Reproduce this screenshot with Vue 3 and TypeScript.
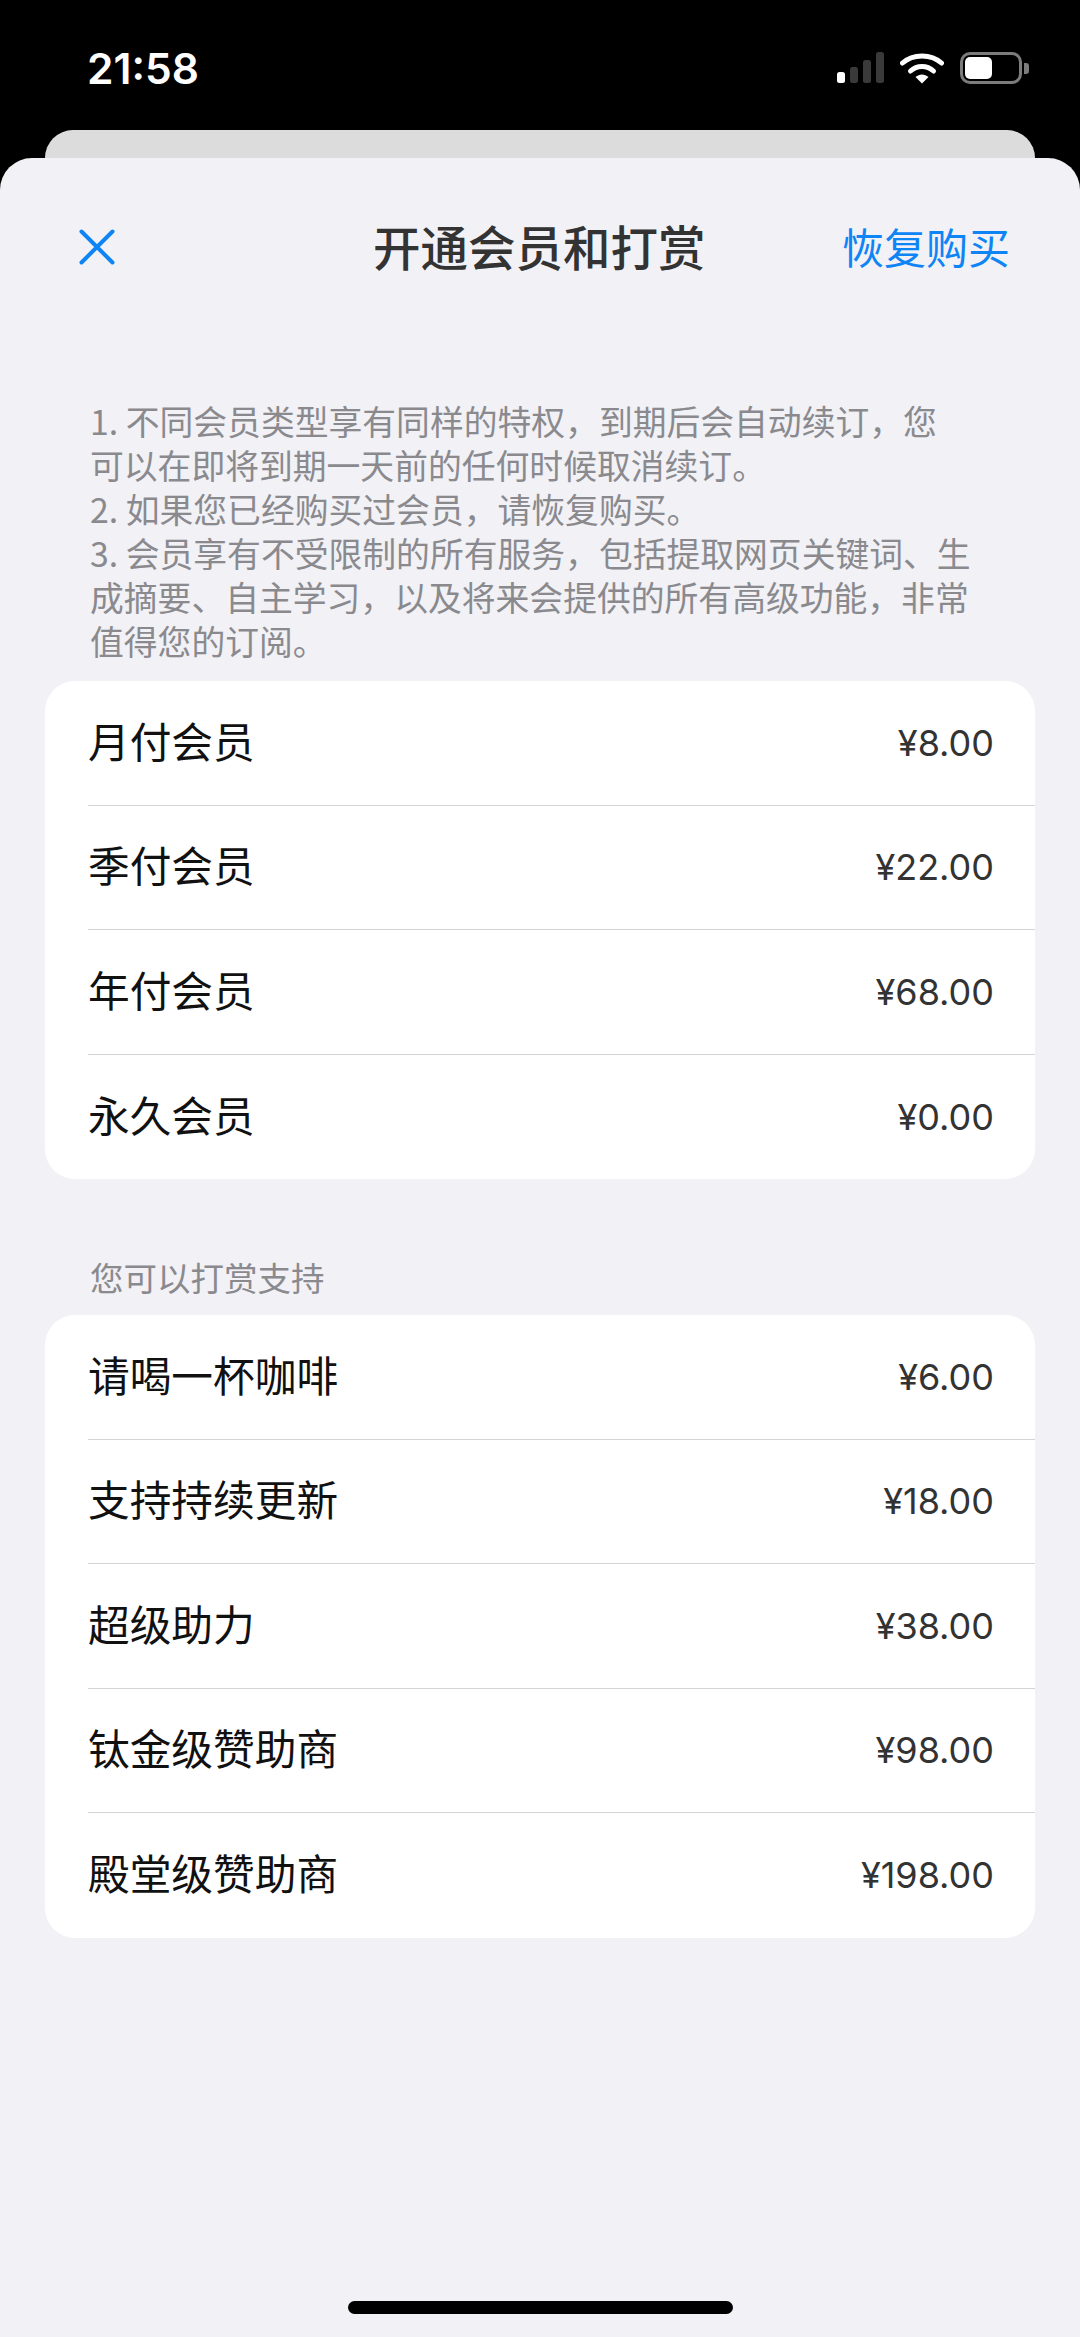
<template>
  <div class="page">
    <!-- status bar -->
    <div class="status-bar">
      <span class="time">21:58</span>
      <div class="status-icons">
        <svg class="signal" width="47" height="32" viewBox="0 0 47 32">
          <rect x="0" y="20" width="8" height="11" rx="2.5" fill="#fff" />
          <rect x="13" y="15" width="8" height="16" rx="2.5" fill="#3a3a3a" />
          <rect x="26" y="8" width="8" height="23" rx="2.5" fill="#3a3a3a" />
          <rect x="39" y="0" width="8" height="31" rx="2.5" fill="#3a3a3a" />
        </svg>
        <svg class="wifi" width="44" height="32" viewBox="0 0 44 32">
          <path d="M2.5 11 C13 1.5 31 1.5 41.5 11" fill="none" stroke="#fff" stroke-width="5" stroke-linecap="round" />
          <path d="M10.5 19 C17 13 27 13 33.5 19" fill="none" stroke="#fff" stroke-width="5" stroke-linecap="round" />
          <path d="M15.5 25 C19.5 21.5 24.5 21.5 28.5 25 L22 31.5 Z" fill="#fff" />
        </svg>
        <div class="battery">
          <div class="battery-fill"></div>
          <div class="battery-tip"></div>
        </div>
      </div>
    </div>

    <div class="back-card"></div>

    <div class="sheet">
      <header class="nav">
        <svg class="close" width="36" height="36" viewBox="0 0 36 36">
          <path d="M2.5 2.5 L33.5 33.5 M33.5 2.5 L2.5 33.5" fill="none" stroke="#0f84f5" stroke-width="4" stroke-linecap="round" />
        </svg>
        <h1 class="nav-title">开通会员和打赏</h1>
        <span class="restore">恢复购买</span>
      </header>

      <div class="notes">
        <p v-for="line in notes" :key="line">{{ line }}</p>
      </div>

      <ul class="card">
        <li v-for="item in plans" :key="item.name" class="row">
          <span class="row-name">{{ item.name }}</span>
          <span class="row-price">{{ item.price }}</span>
        </li>
      </ul>

      <div class="section-label">您可以打赏支持</div>

      <ul class="card">
        <li v-for="item in tips" :key="item.name" class="row">
          <span class="row-name">{{ item.name }}</span>
          <span class="row-price">{{ item.price }}</span>
        </li>
      </ul>

      <div class="home-bar"></div>
    </div>
  </div>
</template>

<script setup lang="ts">
type PriceItem = {
  name: string
  price: string
}

const notes: string[] = [
  '1. 不同会员类型享有同样的特权，到期后会自动续订，您',
  '可以在即将到期一天前的任何时候取消续订。',
  '2. 如果您已经购买过会员，请恢复购买。',
  '3. 会员享有不受限制的所有服务，包括提取网页关键词、生',
  '成摘要、自主学习，以及将来会提供的所有高级功能，非常',
  '值得您的订阅。'
]

const plans: PriceItem[] = [
  { name: '月付会员', price: '¥8.00' },
  { name: '季付会员', price: '¥22.00' },
  { name: '年付会员', price: '¥68.00' },
  { name: '永久会员', price: '¥0.00' }
]

const tips: PriceItem[] = [
  { name: '请喝一杯咖啡', price: '¥6.00' },
  { name: '支持持续更新', price: '¥18.00' },
  { name: '超级助力', price: '¥38.00' },
  { name: '钛金级赞助商', price: '¥98.00' },
  { name: '殿堂级赞助商', price: '¥198.00' }
]
</script>

<style>
html, body {
  margin: 0;
  background: #000;
}
</style>

<style scoped>
* {
  margin: 0;
  padding: 0;
  box-sizing: border-box;
}

.page {
  width: 1080px;
  height: 2337px;
  display: flex;
  flex-direction: column;
  background: #000;
  overflow: hidden;
  font-family: "Noto Sans CJK SC", "Noto Sans", sans-serif;
}

.status-bar {
  height: 130px;
  padding: 46px 58px 0 87px;
  display: flex;
  justify-content: space-between;
  align-items: flex-start;
  flex-shrink: 0;
}

.time {
  font-family: Inter, "Noto Sans", sans-serif;
  font-size: 42.5px;
  font-weight: 600;
  line-height: 46px;
  color: #fff;
}

.status-icons {
  display: flex;
  align-items: flex-start;
  gap: 16px;
  padding-top: 6px;
}

.battery {
  position: relative;
  width: 62px;
  height: 32px;
  border: 3px solid #7c7c7c;
  border-radius: 10px;
  padding: 2px;
}

.battery-fill {
  width: 27px;
  height: 100%;
  background: #fff;
  border-radius: 5px;
}

.battery-tip {
  position: absolute;
  right: -10px;
  top: 7.5px;
  width: 5px;
  height: 11px;
  background: #7c7c7c;
  border-radius: 0 3px 3px 0;
}

.back-card {
  height: 28px;
  margin: 0 45px;
  flex-shrink: 0;
  background: #dcdcdc;
  border-radius: 28px 28px 0 0;
}

.sheet {
  flex: 1;
  padding: 0 45px;
  background: #f1f1f6;
  border-radius: 32px 32px 0 0;
  display: flex;
  flex-direction: column;
  position: relative;
}

.nav {
  height: 182px;
  display: flex;
  align-items: center;
  justify-content: space-between;
  margin: 0 25px 0 34px;
  position: relative;
}

.close {
  width: 36px;
  height: 36px;
  margin-top: -5px;
}

.nav-title {
  position: absolute;
  left: 294px;
  margin-top: -6px;
  font-size: 47.5px;
  font-weight: 500;
  line-height: 60px;
  color: #333;
  white-space: nowrap;
}

.restore {
  margin-top: -6px;
  font-size: 42px;
  line-height: 60px;
  color: #0f84f5;
}

.notes {
  margin-top: 59px;
  padding: 0 0 18px 45px;
  font-size: 33.8px;
  line-height: 44px;
  color: #8a8a8e;
  white-space: nowrap;
}

.card {
  list-style: none;
  background: #fff;
  border-radius: 30px;
  padding-left: 43px;
}

.row {
  height: 124.5px;
  padding-right: 41px;
  display: flex;
  justify-content: space-between;
  align-items: center;
  border-bottom: 1.5px solid #d4d4d6;
}

.row:last-child {
  border-bottom: none;
}

.row-name {
  margin-top: -6px;
  font-size: 41.7px;
  color: #111;
}

.row-price {
  font-family: Inter, "Noto Sans", sans-serif;
  font-size: 36px;
  color: #333;
}

.section-label {
  height: 136px;
  padding: 76px 0 0 45px;
  font-size: 33.5px;
  line-height: 44px;
  color: #8a8a8e;
}

.home-bar {
  position: absolute;
  left: 348px;
  bottom: 23px;
  width: 385px;
  height: 13px;
  border-radius: 6.5px;
  background: #000;
}
</style>
